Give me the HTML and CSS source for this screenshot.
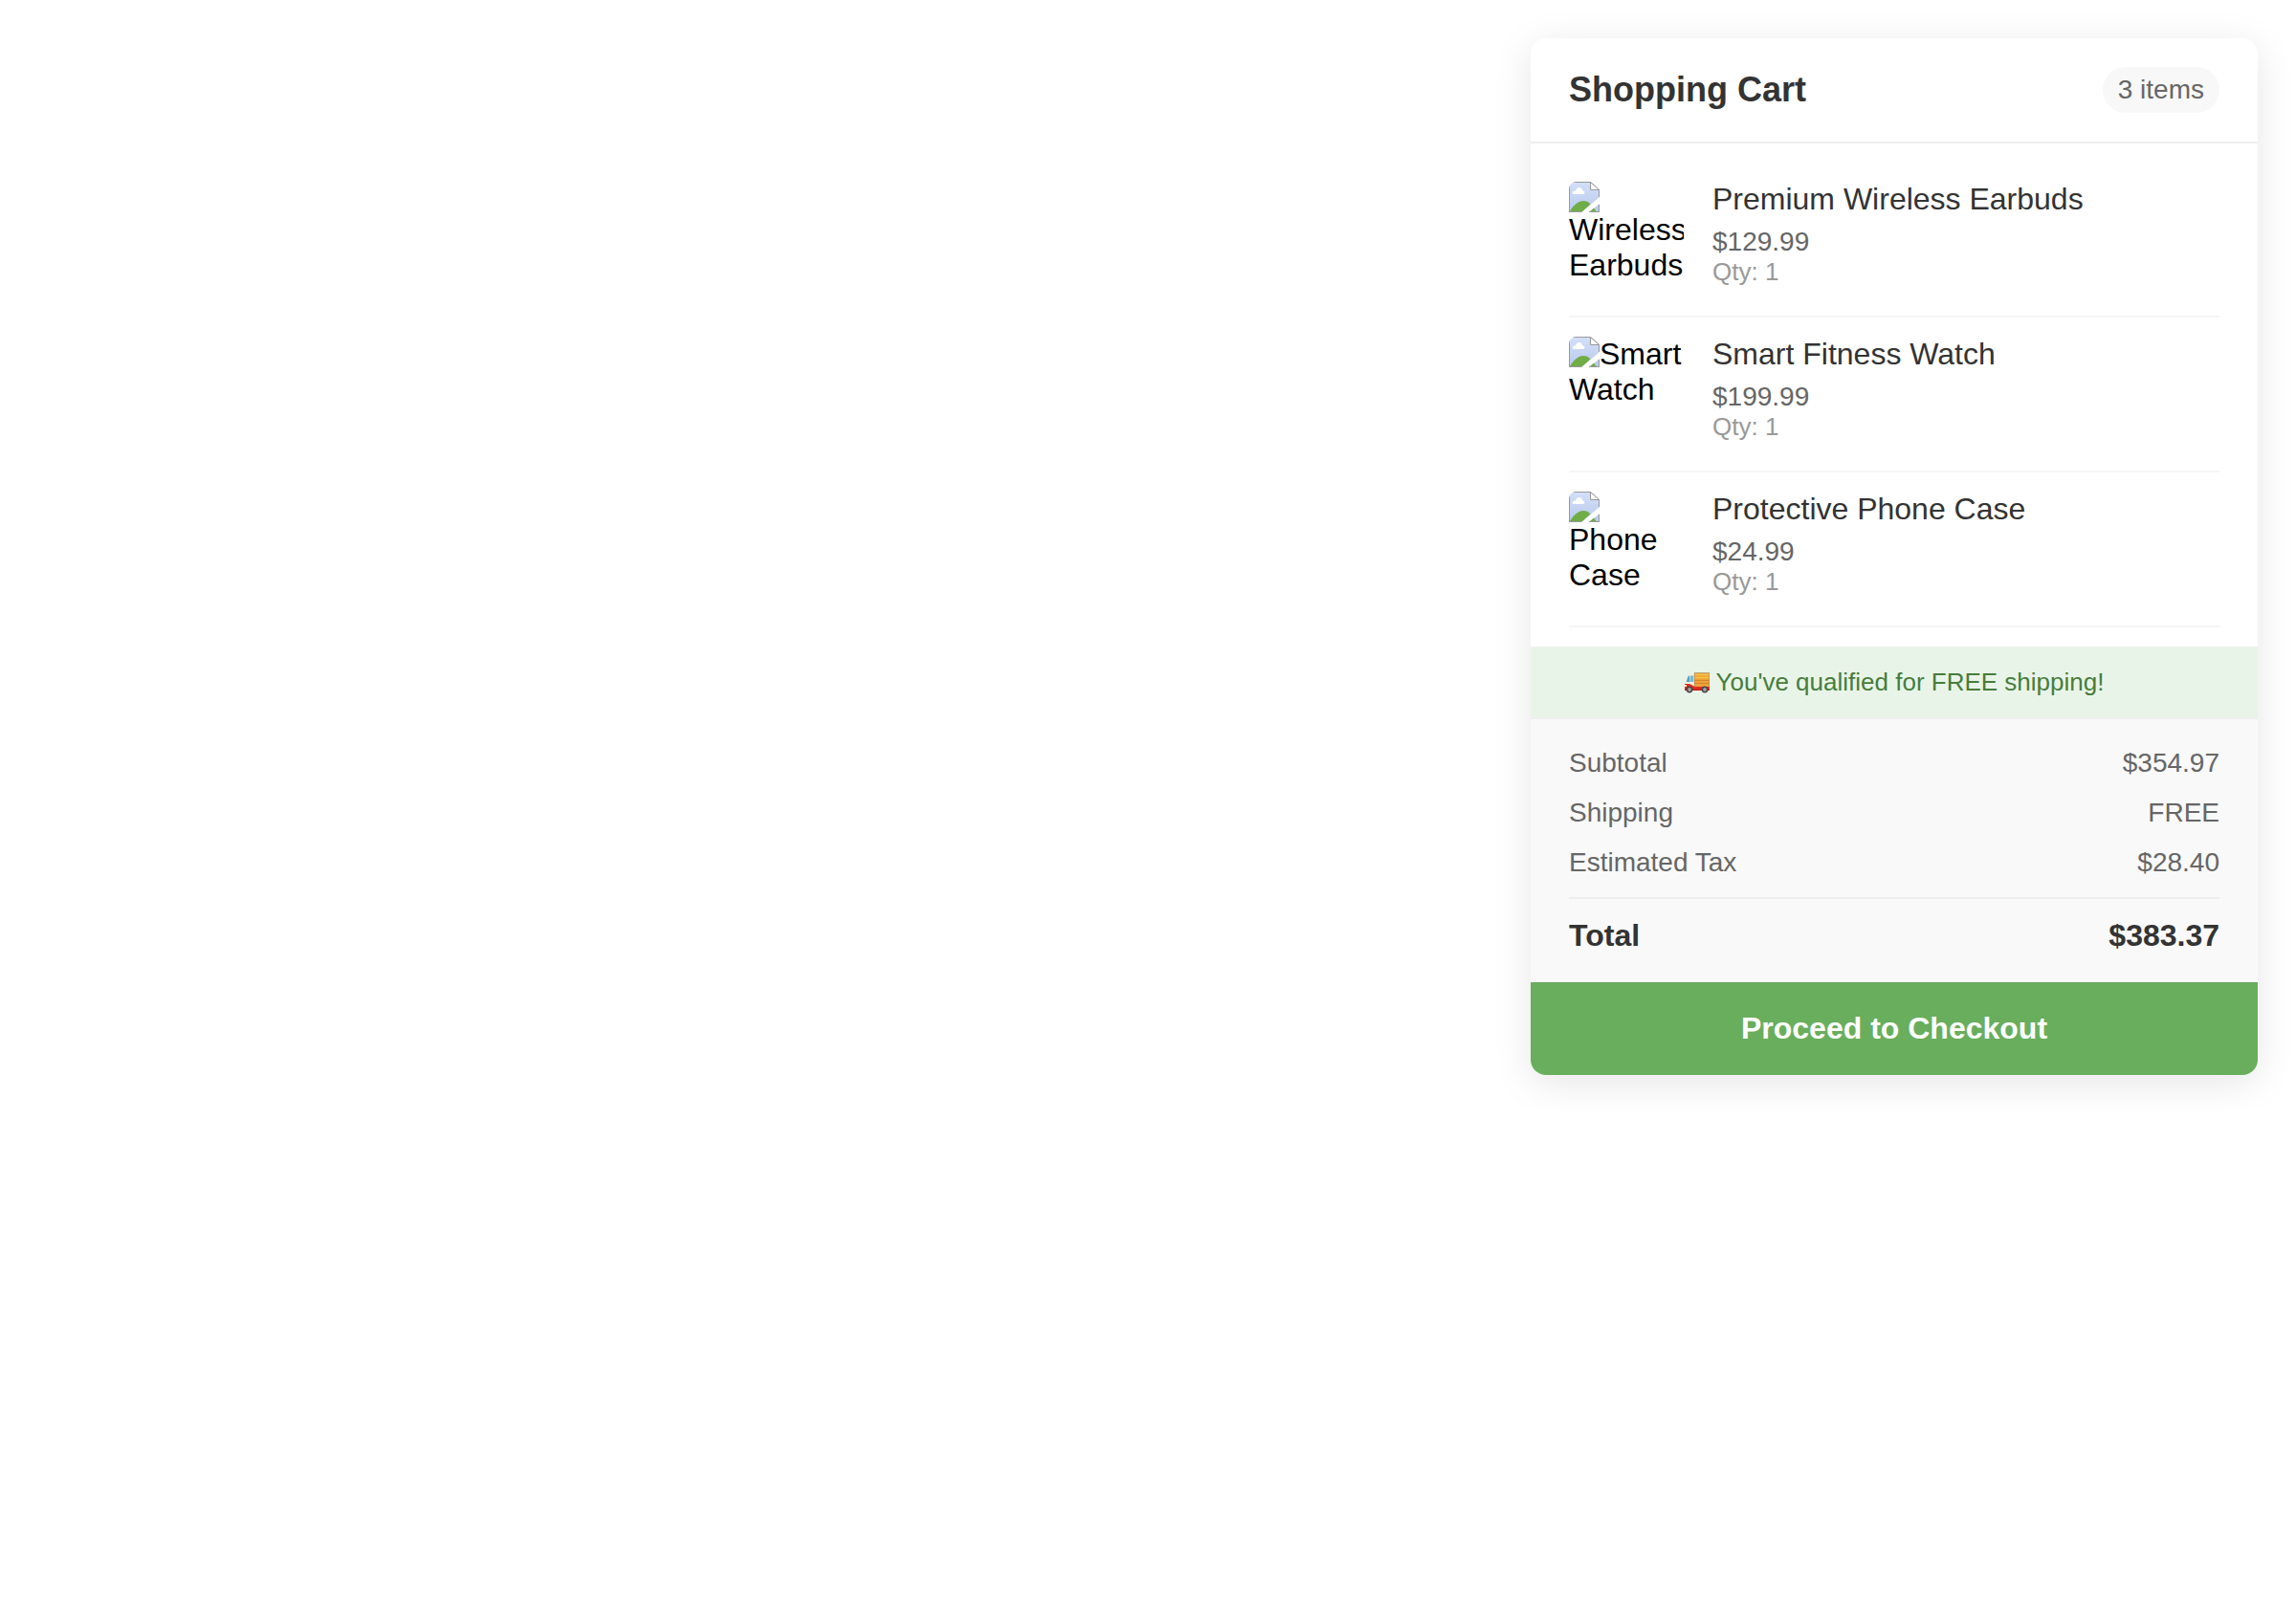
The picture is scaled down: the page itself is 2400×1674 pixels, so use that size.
FILE: index.html
```
<!DOCTYPE html>
<html lang="en">
<head>
<meta charset="utf-8">
<title>Shopping Cart</title>
<link rel="stylesheet" href="styles.css">
</head>
<body>
<svg class="defs" aria-hidden="true">
  <defs>
    <linearGradient id="sky" x1="0" y1="0" x2="0" y2="1">
      <stop offset="0" stop-color="#d3e0fa"/>
      <stop offset="1" stop-color="#b9c9ec"/>
    </linearGradient>
    <symbol id="missing" viewBox="0 0 32 32">
      <path d="M0 0H22.5L32 9V16L13 32H0Z" fill="url(#sky)"/>
      <path d="M21 32L32 23V32Z" fill="#bccbed"/>
      <path d="M1 31C5 24 10 20 15 20C18 20 20.5 21 22.5 23.5L13.5 31.5H1Z" fill="#70ad47"/>
      <path d="M21.5 31.5L26 27.5L29 31.5Z" fill="#70ad47"/>
      <path d="M4.5 13C2.5 11.500 4 9.500 7 9.500C8 5 13.500 5 14 9C16.500 9.500 17 12 15.500 13Z" fill="#fff"/>
      <path d="M.5 32V.5H22.500L31.500 8.500V16M0 31.500H13M21 31.500H31.500V24" fill="none" stroke="#999"/>
      <path d="M22.500 .5V8.500H31.500Z" fill="#fff" stroke="#999"/>
    </symbol>
  </defs>
</svg>
<main class="cart">
  <header class="cart-header">
    <h1 class="cart-title">Shopping Cart</h1>
    <span class="cart-count">3 items</span>
  </header>
  <section class="items">
    <article class="item">
      <div class="thumb"><svg class="missing"><use href="#missing"/></svg>Wireless Earbuds</div>
      <div class="details">
        <div class="name">Premium Wireless Earbuds</div>
        <div class="price">$129.99</div>
        <div class="qty">Qty: 1</div>
      </div>
    </article>
    <article class="item">
      <div class="thumb"><svg class="missing"><use href="#missing"/></svg>Smart Watch</div>
      <div class="details">
        <div class="name">Smart Fitness Watch</div>
        <div class="price">$199.99</div>
        <div class="qty">Qty: 1</div>
      </div>
    </article>
    <article class="item">
      <div class="thumb"><svg class="missing"><use href="#missing"/></svg>Phone Case</div>
      <div class="details">
        <div class="name">Protective Phone Case</div>
        <div class="price">$24.99</div>
        <div class="qty">Qty: 1</div>
      </div>
    </article>
  </section>
  <div class="notice">
    <svg class="truck" viewBox="0 0 26 22">
      <path d="M1 12L3 4Q3.4 2.500 5 2.500H10V15H1Z" fill="#f1eee0"/>
      <path d="M1.600 10L3.400 4.400Q3.800 3.500 5 3.500V10Z" fill="#5d9fbd"/>
      <path d="M5.800 3.500H9.200V10H5.400Z" fill="#79b9d3"/>
      <path d="M0 12H5L10 14.500H26V19H0Z" fill="#e02c20"/>
      <path d="M0 17.500H26V19H0Z" fill="#b91f1a"/>
      <path d="M10 .5H26V15H10Z" fill="#eda23b"/>
      <path d="M10 2.500H26M10 5.500H26" stroke="#f5c546" stroke-width="1.400"/>
      <path d="M10 8.500H26M10 11.500H26" stroke="#d88529"/>
      <path d="M10 .5H26" stroke="#b7aa87"/>
      <path d="M10.300 1V15M25.600 1V15" stroke="#b98a48" stroke-width=".7"/>
      <path d="M0 13H2V15H0Z" fill="#ffe3a1"/>
      <circle cx="5" cy="18" r="3.400" fill="#454545"/><circle cx="5" cy="18" r="1.900" fill="#a4a4a4"/>
      <circle cx="21" cy="18" r="3.400" fill="#454545"/><circle cx="21" cy="18" r="1.900" fill="#a4a4a4"/>
    </svg>
    <span>You've qualified for FREE shipping!</span>
  </div>
  <section class="summary">
    <div class="row"><span>Subtotal</span><span>$354.97</span></div>
    <div class="row"><span>Shipping</span><span>FREE</span></div>
    <div class="row"><span>Estimated Tax</span><span>$28.40</span></div>
    <div class="row total"><span>Total</span><span>$383.37</span></div>
  </section>
  <button class="checkout" type="button">Proceed to Checkout</button>
</main>
</body>
</html>
```
FILE: styles.css
```
* {
  box-sizing: border-box;
}

body {
  display: flex;
  justify-content: flex-end;
  align-items: flex-start;
  margin: 0;
  padding: 40px;
  background: #fff;
  font-family: "Liberation Sans", Arial, sans-serif;
}

.defs {
  position: absolute;
  width: 0;
  height: 0;
}

.cart {
  width: 760px;
  overflow: hidden;
  border-radius: 16px;
  background: #fff;
  box-shadow: 0 8px 40px rgba(0, 0, 0, 0.1);
}

.cart-header {
  display: flex;
  justify-content: space-between;
  align-items: center;
  padding: 30px 40px;
  border-bottom: 2px solid #eee;
}

.cart-title {
  margin: 0;
  padding-bottom: 1px;
  color: #333;
  font-size: 36px;
  line-height: 41px;
}

.cart-count {
  padding: 8px 16px;
  border-radius: 24px;
  background: #f8f8f8;
  color: #666;
  font-size: 28px;
  line-height: 32px;
}

.items {
  padding: 20px 40px;
}

.item {
  display: flex;
  gap: 30px;
  padding: 20px 0;
  border-bottom: 2px solid #f5f5f5;
}

.thumb {
  flex: none;
  width: 120px;
  height: 120px;
  overflow: hidden;
  border-radius: 8px;
  color: #000;
  font-size: 32px;
  line-height: 37px;
}

.missing {
  float: left;
  width: 32px;
  height: 32px;
}

.name {
  margin-bottom: 10px;
  color: #333;
  font-size: 32px;
  line-height: 37px;
}

.price {
  color: #666;
  font-size: 28px;
  line-height: 32px;
}

.qty {
  color: #999;
  font-size: 26px;
  line-height: 30px;
}

.notice {
  display: flex;
  justify-content: center;
  align-items: center;
  gap: 7px;
  padding: 20px;
  background: #e9f4e9;
  color: #467d3a;
  font-size: 26px;
  line-height: 34px;
}

.truck {
  width: 26px;
  height: 22px;
  margin-top: 2px;
}

.summary {
  display: flex;
  flex-direction: column;
  gap: 20px;
  padding: 30px 40px;
  border-top: 2px solid #eee;
  background: #f9f9f9;
}

.row {
  display: flex;
  justify-content: space-between;
  color: #666;
  font-size: 28px;
  line-height: 32px;
}

.total {
  padding-top: 20px;
  border-top: 2px solid #eee;
  color: #333;
  font-size: 32px;
  font-weight: bold;
  line-height: 37px;
}

.checkout {
  display: block;
  width: 100%;
  padding: 30px;
  border: 0;
  background: #69ae5d;
  color: #fff;
  font-family: inherit;
  font-size: 32px;
  font-weight: bold;
  line-height: 37px;
}
```
